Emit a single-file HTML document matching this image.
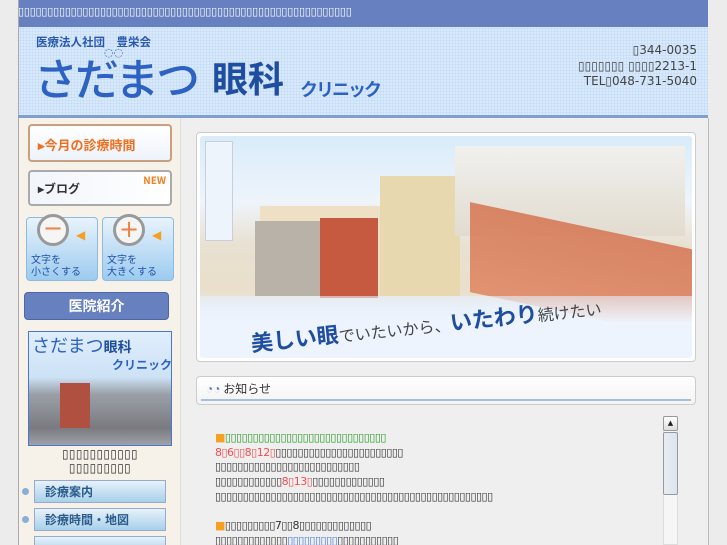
<!DOCTYPE html>
<html><head><meta charset="utf-8">
<style>
*{margin:0;padding:0;box-sizing:border-box}
html,body{width:727px;height:545px;overflow:hidden}
body{background:#ececec;font-family:"DejaVu Sans","Liberation Sans",sans-serif;position:relative}
.abs{position:absolute}
.tf{font-family:"DejaVu Sans",sans-serif;white-space:nowrap}
#top{left:18px;top:0;width:690px;height:27px;background:#6680c0;border-left:1px solid #aaa}
#toptext{left:18px;top:5px;color:#fff;font-size:11px;letter-spacing:-0.2px}
#hdr{left:18px;top:27px;width:690px;height:88px;background:#d7e9fb;background-image:radial-gradient(#c3dcf5 1px,transparent 1px);background-size:3px 3px;border-left:1px solid #aaa}
#hline{left:18px;top:115px;width:690px;height:3px;background:#7f9fcf}
#side{left:18px;top:118px;width:163px;height:427px;background:#f6f2ea;border-left:1px solid #aaa;border-right:1px solid #ddd}
#main{left:181px;top:118px;width:528px;height:427px;background:#efefef;border-right:1px solid #bbb}
.btn{border-radius:4px}
</style></head><body>
<div id="top" class="abs"></div>
<div id="toptext" class="abs tf">▯▯▯▯▯▯▯▯▯▯▯▯▯▯▯▯▯▯▯▯▯▯▯▯▯▯▯▯▯▯▯▯▯▯▯▯▯▯▯▯▯▯▯▯▯▯▯▯▯▯▯▯▯▯▯▯▯</div>
<div id="hdr" class="abs"></div>
<div id="hline" class="abs"></div>
<div class="abs" style="left:36px;top:34px;font-size:11.5px;color:#2a58b0;font-weight:bold;font-family:'Noto Sans CJK JP',sans-serif">医療法人社団　豊栄会</div>
<div class="abs" style="left:34px;top:46px;font-size:44px;line-height:60px;color:#2e62c2;font-family:'Noto Sans CJK JP',sans-serif;letter-spacing:-3px;font-weight:500;white-space:nowrap">さだまつ</div>
<div class="abs" style="left:104px;top:46px;font-size:11px;color:#2e62c2">◌◌</div>
<div class="abs" style="left:212px;top:54px;font-size:36px;line-height:46px;color:#1f4d9f;font-family:'Noto Sans CJK JP',sans-serif;font-weight:bold">眼科</div>
<div class="abs" style="left:300px;top:76px;font-size:18px;color:#2e62c2;font-family:'Noto Sans CJK JP',sans-serif;font-weight:bold;letter-spacing:-2px">クリニック</div>
<div class="abs tf" style="right:30px;top:43px;font-size:12px;color:#444;text-align:right;line-height:15.5px">▯344-0035<br>▯▯▯▯▯▯▯ ▯▯▯▯2213-1<br>TEL▯048-731-5040</div>

<div id="side" class="abs"></div>
<div id="main" class="abs"></div>

<div class="abs btn" style="left:28px;top:124px;width:144px;height:38px;background:linear-gradient(#fff,#eef3fb);border:2px solid #c8a080;color:#f07020;font-size:13px;font-weight:bold;padding:9px 0 0 8px;font-family:'Noto Sans CJK JP',sans-serif">▸今月の診療時間</div>
<div class="abs btn" style="left:28px;top:170px;width:144px;height:36px;background:linear-gradient(90deg,#f2f5fb,#fff);border:2px solid #aaa;color:#333;font-size:12px;font-weight:bold;padding:8px 0 0 8px;font-family:'Noto Sans CJK JP',sans-serif">▸ブログ<span style="position:absolute;right:4px;top:0;color:#f08020;font-size:10px">NEW</span></div>
<div class="abs btn" style="left:26px;top:217px;width:72px;height:64px;background:linear-gradient(#e8f3fc,#9ccbef);border:1px solid #8bbbe0"></div>
<div class="abs btn" style="left:102px;top:217px;width:72px;height:64px;background:linear-gradient(#e8f3fc,#9ccbef);border:1px solid #8bbbe0"></div>
<div class="abs" style="left:37px;top:214px;width:32px;height:32px;border-radius:50%;border:3px solid #999;background:#f5f5f5;color:#f08040;font-size:24px;line-height:22px;text-align:center">−</div>
<div class="abs" style="left:113px;top:214px;width:32px;height:32px;border-radius:50%;border:3px solid #999;background:#f5f5f5;color:#f08040;font-size:24px;line-height:24px;text-align:center">+</div>
<div class="abs" style="left:76px;top:228px;color:#f5a020;font-size:12px">◀</div>
<div class="abs" style="left:152px;top:228px;color:#f5a020;font-size:12px">◀</div>
<div class="abs" style="left:31px;top:253px;font-size:10px;line-height:12px;color:#1f50a8;font-family:'Noto Sans CJK JP',sans-serif">文字を<br>小さくする</div>
<div class="abs" style="left:107px;top:253px;font-size:10px;line-height:12px;color:#1f50a8;font-family:'Noto Sans CJK JP',sans-serif">文字を<br>大きくする</div>
<div class="abs btn" style="left:24px;top:292px;width:145px;height:28px;background:#6680c0;border:1px solid #4d66a8;color:#fff;font-size:14px;text-align:center;line-height:26px;font-family:'Noto Sans CJK JP',sans-serif;font-weight:bold">医院紹介</div>
<div class="abs" style="left:28px;top:331px;width:144px;height:115px;border:1px solid #4a78d0;background:linear-gradient(#dfeefc 0,#cde2f6 40%,#9aa0a8 55%,#7a7a80 85%,#a0a0a8 100%)"></div>
<div class="abs" style="left:60px;top:383px;width:30px;height:45px;background:#b05040"></div>
<div class="abs" style="left:32px;top:332px;font-size:18px;color:#2e62c2;font-family:'Noto Sans CJK JP',sans-serif">さだまつ<span style="font-size:14px;color:#1f4d9f;font-weight:bold">眼科</span></div>
<div class="abs" style="left:112px;top:356px;font-size:12px;color:#2e62c2;font-weight:bold;font-family:'Noto Sans CJK JP',sans-serif">クリニック</div>
<div class="abs tf" style="left:28px;width:144px;top:447px;font-size:12px;line-height:14px;text-align:center;color:#333;letter-spacing:0.3px">▯▯▯▯▯▯▯▯▯▯▯<br>▯▯▯▯▯▯▯▯▯</div>
<div class="abs" style="left:22px;top:488px;width:7px;height:7px;border-radius:50%;background:#8aaed8"></div>
<div class="abs" style="left:22px;top:516px;width:7px;height:7px;border-radius:50%;background:#8aaed8"></div>
<div class="abs" style="left:34px;top:480px;width:132px;height:23px;background:linear-gradient(#e6f2fa,#a8d0ea);border:1px solid #9ac;color:#2a5a8a;font-size:12px;padding:2px 0 0 10px;font-family:'Noto Sans CJK JP',sans-serif;font-weight:bold">診療案内</div>
<div class="abs" style="left:34px;top:508px;width:132px;height:23px;background:linear-gradient(#e6f2fa,#a8d0ea);border:1px solid #9ac;color:#2a5a8a;font-size:12px;padding:2px 0 0 10px;font-family:'Noto Sans CJK JP',sans-serif;font-weight:bold">診療時間・地図</div>
<div class="abs" style="left:34px;top:536px;width:132px;height:9px;overflow:hidden;background:linear-gradient(#e6f2fa,#c8e0f2);border:1px solid #9ac;border-bottom:0"></div>

<div class="abs" style="left:196px;top:132px;width:500px;height:230px;border:1px solid #ccc;border-radius:4px;background:#fff;padding:3px">
 <div style="position:relative;width:100%;height:100%;overflow:hidden;border-radius:3px;background:linear-gradient(#d9ecfa,#eef4fa 30%,#e8e0d0 50%,#eadfcc 70%,#e4eef9 80%,#f4f8fd)">
  <div style="position:absolute;left:5px;top:5px;width:28px;height:100px;background:#eef4fb;border:1px solid #ccd"></div>
  <div style="position:absolute;left:60px;top:70px;width:120px;height:90px;background:#ede0c4"></div>
  <div style="position:absolute;left:55px;top:85px;width:120px;height:75px;background:#b9b2a8"></div>
  <div style="position:absolute;left:120px;top:82px;width:58px;height:80px;background:#c65a40"></div>
  <div style="position:absolute;left:180px;top:40px;width:80px;height:120px;background:#e8d8b0"></div>
  <div style="position:absolute;left:255px;top:10px;width:230px;height:90px;background:linear-gradient(#f0f0ee,#e2dccf)"></div>
  <div style="position:absolute;left:270px;top:90px;width:225px;height:90px;background:linear-gradient(#d57a58,#e08a66);transform:skewY(12deg);opacity:.9"></div>
  <div style="position:absolute;left:0;top:160px;width:100%;height:70px;background:linear-gradient(rgba(230,240,252,.6),#eef4fd 40%)"></div>
  <div style="position:absolute;left:50px;top:172px;font-size:22px;color:#1f4d9f;font-family:'Noto Sans CJK JP',sans-serif;font-weight:bold;transform:rotate(-6deg);white-space:nowrap">美しい眼<span style="font-size:16px;color:#444;font-weight:normal">でいたいから、</span><span>いたわり</span><span style="font-size:16px;color:#444;font-weight:normal">続けたい</span></div>
 </div>
</div>

<div class="abs" style="left:196px;top:376px;width:500px;height:29px;border:1px solid #ccc;border-radius:4px;background:linear-gradient(#fff,#f3f3f3)">
 <div style="position:absolute;left:4px;right:4px;bottom:3px;height:2px;background:#a8bde0"></div>
 <div style="position:absolute;left:9px;top:3px;font-size:12px;color:#333;font-family:'Noto Sans CJK JP',sans-serif"><span style="color:#5a7ac0">◔◔</span> お知らせ</div>
</div>
<div class="abs tf" style="left:215px;top:431px;font-size:11px;line-height:14.7px;color:#333;letter-spacing:-0.5px">
<span style="color:#f5a020">■</span><span style="color:#2a9a2a">▯▯▯▯▯▯▯▯▯▯▯▯▯▯▯▯▯▯▯▯▯▯▯▯▯▯▯▯▯</span><br>
<span style="color:#f05050">8▯6▯▯8▯12▯</span>▯▯▯▯▯▯▯▯▯▯▯▯▯▯▯▯▯▯▯▯▯▯▯<br>
▯▯▯▯▯▯▯▯▯▯▯▯▯▯▯▯▯▯▯▯▯▯▯▯▯▯<br>
▯▯▯▯▯▯▯▯▯▯▯▯<span style="color:#f05050">8▯13▯</span>▯▯▯▯▯▯▯▯▯▯▯▯▯<br>
▯▯▯▯▯▯▯▯▯▯▯▯▯▯▯▯▯▯▯▯▯▯▯▯▯▯▯▯▯▯▯▯▯▯▯▯▯▯▯▯▯▯▯▯▯▯▯▯▯▯<br><br>
<span style="color:#f5a020">■</span>▯▯▯▯▯▯▯▯▯7▯▯8▯▯▯▯▯▯▯▯▯▯▯▯▯<br>
▯▯▯▯▯▯▯▯▯▯▯▯▯<span style="color:#4a7ae0">▯▯▯▯▯▯▯▯▯</span>▯▯▯▯▯▯▯▯▯▯▯
</div>
<div class="abs" style="left:663px;top:416px;width:15px;height:129px;background:#f6f6f6;border:1px solid #ddd"></div>
<div class="abs" style="left:663px;top:416px;width:15px;height:15px;background:linear-gradient(#fff,#ddd);border:1px solid #999;border-radius:2px;font-size:7px;text-align:center;line-height:13px;color:#222">▲</div>
<div class="abs" style="left:663px;top:432px;width:15px;height:63px;background:linear-gradient(90deg,#e8ecf2,#dde4ee);border:1px solid #999;border-radius:2px"></div>
</body></html>
